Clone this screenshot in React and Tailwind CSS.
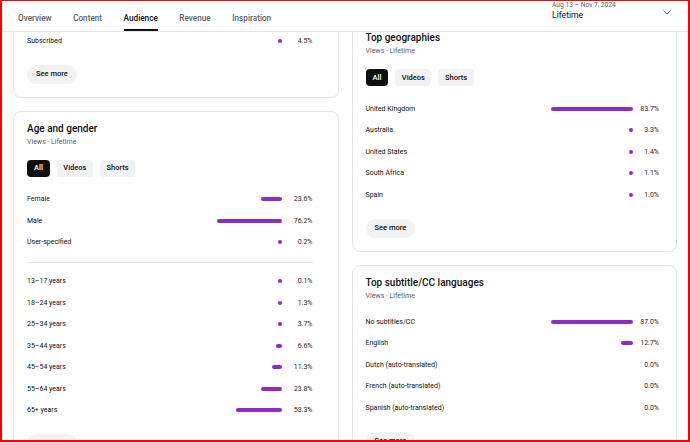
import React from "react";

const tabs = ["Overview", "Content", "Audience", "Revenue", "Inspiration"];

const Chips = () => (
  <div className="mt-[11px] flex gap-[7px] text-[7.5px] font-medium">
    <span className="flex h-[17px] items-center rounded-[4px] bg-[#0f0f0f] px-[7px] text-white">All</span>
    <span className="flex h-[17px] items-center rounded-[4px] bg-[#f2f2f2] px-[6.5px] text-[#0f0f0f]">Videos</span>
    <span className="flex h-[17px] items-center rounded-[4px] bg-[#f2f2f2] px-[6.5px] text-[#0f0f0f]">Shorts</span>
  </div>
);

const Row = ({ label, value, max, barW, barCls, pctCls }) => {
  const w = value > 0 ? Math.max(4, (value / max) * barW) : 0;
  return (
    <div className="flex h-[21.5px] items-center text-[7px] text-[#0f0f0f]">
      <span className="flex-1">{label}</span>
      <div className={`flex justify-end ${barCls}`}>
        {w > 0 && <div className="h-[4px] rounded-full bg-[#8d2bc4]" style={{ width: w }} />}
      </div>
      <span className={`text-right text-[#282828] ${pctCls}`}>{value.toFixed(1)}%</span>
    </div>
  );
};

const SeeMore = () => (
  <button className="mt-[13px] flex h-[19px] items-center rounded-full bg-[#f2f2f2] px-[9px] text-[7.5px] font-medium text-[#0f0f0f]">
    See more
  </button>
);

const Card = ({ title, chips, rows, padCls, barW, barCls, pctCls, children }) => {
  const max = Math.max(...(rows || []).map((r) => r[1]), 1);
  return (
    <div className={`rounded-[8px] border border-[#e5e5e5] bg-white pt-[10px] pb-[13px] pl-[13px] ${padCls}`}>
      <h3 className="text-[10px] leading-[14px] font-medium text-[#0f0f0f]">{title}</h3>
      <p className="text-[7px] leading-[13px] text-[#606060]">Views · Lifetime</p>
      {chips && <Chips />}
      <div className={chips ? "mt-[12px]" : "mt-[8.5px]"}>
        {children ||
          rows.map(([label, value]) => (
            <Row key={label} label={label} value={value} max={max} barW={barW} barCls={barCls} pctCls={pctCls} />
          ))}
      </div>
      <SeeMore />
    </div>
  );
};

const gender = [
  ["Female", 23.6],
  ["Male", 76.2],
  ["User-specified", 0.2],
];

const ages = [
  ["13–17 years", 0.1],
  ["18–24 years", 1.3],
  ["25–34 years", 3.7],
  ["35–44 years", 6.6],
  ["45–54 years", 11.3],
  ["55–64 years", 23.8],
  ["65+ years", 53.3],
];

const geos = [
  ["United Kingdom", 83.7],
  ["Australia", 3.3],
  ["United States", 1.4],
  ["South Africa", 1.1],
  ["Spain", 1.0],
];

const subs = [
  ["No subtitles/CC", 87.0],
  ["English", 12.7],
  ["Dutch (auto-translated)", 0],
  ["French (auto-translated)", 0],
  ["Spanish (auto-translated)", 0],
];

const App = () => {
  const left = { barW: 65, barCls: "w-[65px]", pctCls: "w-[31px]" };
  return (
    <div className="flex h-[442px] w-[690px] flex-col overflow-hidden border-2 border-t border-[#ff0000] bg-white font-['Roboto',sans-serif]">
      <header className="flex h-[31px] shrink-0 border-b border-[#e5e5e5] bg-white pl-[16px] pr-[17px]">
        <nav className="flex gap-[21.5px]">
          {tabs.map((t) => (
            <div key={t} className="flex h-full pt-[6px]">
              <span
                className={`flex items-center text-[8.2px] font-medium ${
                  t === "Audience" ? "border-b-2 border-[#0f0f0f] text-[#0f0f0f]" : "border-b-2 border-transparent text-[#606060]"
                }`}
              >
                {t}
              </span>
            </div>
          ))}
        </nav>
        <div className="ml-auto flex w-[119px] justify-between">
          <div className="flex flex-col">
            <span className="text-[6.7px] leading-[8px] text-[#606060]">Aug 13 – Nov 7, 2024</span>
            <span className="text-[8.6px] leading-[12px] text-[#0f0f0f]">Lifetime</span>
          </div>
          <svg className="mt-[9px]" width="8" height="5" viewBox="0 0 8 5" fill="none">
            <path d="M0.5 0.5 L4 4 L7.5 0.5" stroke="#606060" strokeWidth="1" />
          </svg>
        </div>
      </header>

      <div className="min-h-0 flex-1 overflow-hidden">
        <div className="grid grid-cols-2 gap-[13px] px-[11px]">
          <div className="-mt-[2px] flex flex-col gap-[13px]">
            <div className="rounded-b-[8px] border border-t-0 border-[#e5e5e5] bg-white pb-[13px] pl-[13px] pr-[25px]">
              <Row label="Subscribed" value={4.5} max={95.5} {...left} />
              <SeeMore />
            </div>
            <Card title="Age and gender" chips padCls="pr-[25px]">
              {gender.map(([l, v]) => (
                <Row key={l} label={l} value={v} max={76.2} {...left} />
              ))}
              <div className="mt-[8.5px] mb-[8px] border-t border-[#e5e5e5]" />
              {ages.map(([l, v]) => (
                <Row key={l} label={l} value={v} max={76.2} {...left} />
              ))}
            </Card>
          </div>
          <div className="-mt-[12px] flex flex-col gap-[13px]">
            <Card title="Top geographies" chips rows={geos} padCls="pr-[17px]" barW={82} barCls="w-[82px]" pctCls="w-[26px]" />
            <Card title="Top subtitle/CC languages" rows={subs} padCls="pr-[17px]" barW={82} barCls="w-[82px]" pctCls="w-[26px]" />
          </div>
        </div>
      </div>
    </div>
  );
};

export default App;
